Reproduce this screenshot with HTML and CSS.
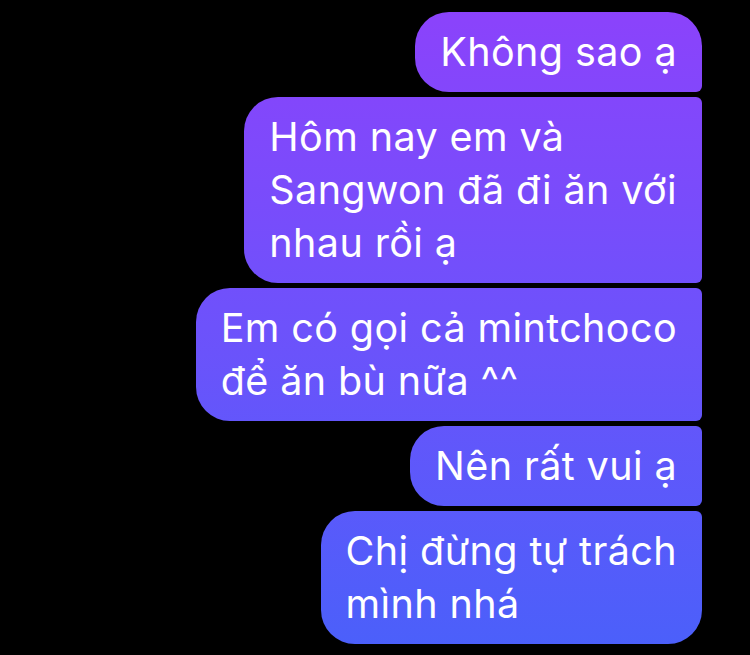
FILE: index.html
```html
<!DOCTYPE html>
<html lang="vi">
<head>
    <meta charset="UTF-8">
    <meta name="viewport" content="width=device-width, initial-scale=1.0">
    <title>Tin nhắn</title>
    <link rel="stylesheet" href="styles.css">
</head>
<body>
    <div class="thread">
        <!-- outgoing group -->
        <div class="bubble first">Không sao ạ</div>
        <div class="bubble">Hôm nay em và<br>Sangwon đã đi ăn với<br>nhau rồi ạ</div>
        <div class="bubble">Em có gọi cả mintchoco<br>để ăn bù nữa ^^</div>
        <div class="bubble">Nên rất vui ạ</div>
        <div class="bubble last">Chị đừng tự trách<br>mình nhá</div>
    </div>
</body>
</html>
```

FILE: styles.css
```css
body {
    margin: 0;
    padding: 0;
    background-color: #000;
    font-family: Inter, "Noto Sans", sans-serif;
    overflow: hidden;
}

.thread {
    display: flex;
    flex-direction: column;
    align-items: flex-end;
    gap: 5px;
    padding: 12px 48px 0 0;
}

.bubble {
    color: #fff;
    font-size: 39.5px;
    line-height: 53px;
    letter-spacing: 0.4px;
    padding: 13.5px 25px;
    border-radius: 34px 6px 6px 34px;
    /* gradient is tied to the screen, like messenger */
    background: linear-gradient(180deg, #8c42fb 0%, #6d52fb 50%, #4a60fa 100%) fixed;
}

.bubble.first {
    border-radius: 34px 34px 6px 34px;
}

.bubble.last {
    border-radius: 34px 6px 34px 34px;
}
```
